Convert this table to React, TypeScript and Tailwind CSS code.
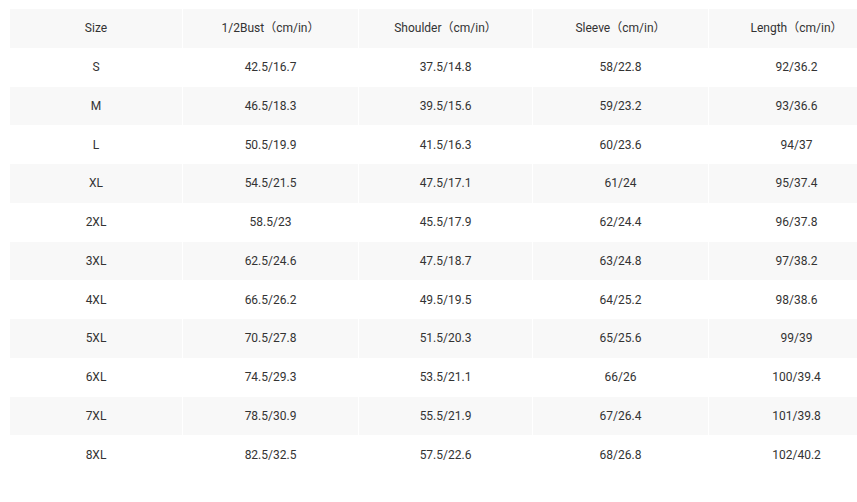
const headers = ['Size', '1/2Bust（cm/in）', 'Shoulder（cm/in）', 'Sleeve（cm/in）', 'Length（cm/in）']

const rows = [
  ['S', '42.5/16.7', '37.5/14.8', '58/22.8', '92/36.2'],
  ['M', '46.5/18.3', '39.5/15.6', '59/23.2', '93/36.6'],
  ['L', '50.5/19.9', '41.5/16.3', '60/23.6', '94/37'],
  ['XL', '54.5/21.5', '47.5/17.1', '61/24', '95/37.4'],
  ['2XL', '58.5/23', '45.5/17.9', '62/24.4', '96/37.8'],
  ['3XL', '62.5/24.6', '47.5/18.7', '63/24.8', '97/38.2'],
  ['4XL', '66.5/26.2', '49.5/19.5', '64/25.2', '98/38.6'],
  ['5XL', '70.5/27.8', '51.5/20.3', '65/25.6', '99/39'],
  ['6XL', '74.5/29.3', '53.5/21.1', '66/26', '100/39.4'],
  ['7XL', '78.5/30.9', '55.5/21.9', '67/26.4', '101/39.8'],
  ['8XL', '82.5/32.5', '57.5/22.6', '68/26.8', '102/40.2'],
]

const widths = ['w-[172px]', 'w-[176px]', 'w-[174px]', 'w-[176px]', 'w-[176px]']

function Row({ cells, shaded }: { cells: string[]; shaded: boolean }) {
  return (
    <div className="flex h-[38.75px]">
      {cells.map((c, i) => (
        <div
          key={i}
          className={`${widths[i]} shrink-0 flex items-center justify-center ${shaded ? 'bg-[#f8f8f8]' : 'bg-white'} ${i > 0 ? 'border-l border-white' : ''}`}
        >
          {c}
        </div>
      ))}
    </div>
  )
}

export default function App() {
  return (
    <div
      className="w-[857px] h-[502px] overflow-hidden bg-white pt-[9px] pl-[10px] text-[12px] text-[#333]"
      style={{ fontFamily: 'Roboto, "Noto Sans CJK SC", sans-serif' }}
    >
      <div className="w-[874px]">
        <Row cells={headers} shaded />
        {rows.map((r, i) => (
          <Row key={r[0]} cells={r} shaded={i % 2 === 1} />
        ))}
      </div>
    </div>
  )
}
